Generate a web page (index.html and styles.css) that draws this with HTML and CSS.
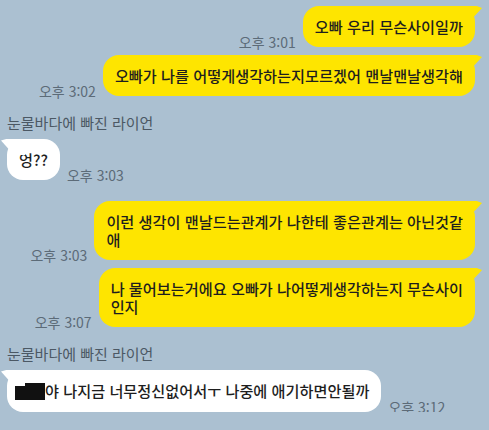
FILE: index.html
```html
<!DOCTYPE html>
<html lang="ko">
<head>
    <meta charset="UTF-8">
    <meta name="viewport" content="width=device-width, initial-scale=1.0">
    <title>채팅</title>
    <link rel="stylesheet" href="styles.css">
</head>
<body>
    <div class="chat">
        <div class="row sent">
            <span class="time">오후 3:01</span>
            <div class="bubble">오빠 우리 무슨사이일까</div>
        </div>
        <div class="row sent cont">
            <span class="time">오후 3:02</span>
            <div class="bubble">오빠가 나를 어떻게생각하는지모르겠어 맨날맨날생각해</div>
        </div>

        <div class="name">눈물바다에 빠진 라이언</div>
        <div class="row received">
            <div class="bubble">엉??</div>
            <span class="time">오후 3:03</span>
        </div>

        <div class="row sent group">
            <span class="time">오후 3:03</span>
            <div class="bubble">이런 생각이 맨날드는관계가 나한테 좋은관계는 아닌것같<br>애</div>
        </div>
        <div class="row sent cont">
            <span class="time">오후 3:07</span>
            <div class="bubble">나 물어보는거에요 오빠가 나어떻게생각하는지 무슨사이<br>인지</div>
        </div>

        <div class="name">눈물바다에 빠진 라이언</div>
        <div class="row received">
            <div class="bubble"><span class="hidden-name"></span>야 나지금 너무정신없어서ㅜ 나중에 애기하면안될까</div>
            <span class="time">오후 3:12</span>
        </div>
    </div>
</body>
</html>
```

FILE: styles.css
```css
body {
    margin: 0;
    background-color: #abc0d1;
    font-family: "Noto Sans CJK KR", "Noto Sans", sans-serif;
    color: #1e1e1e;
}
.chat {
    display: flex;
    flex-direction: column;
    padding-top: 6px;
}
.row {
    display: flex;
    align-items: flex-end;
    gap: 7px;
}
.row.cont {
    margin-top: 8px;
}
.row.group {
    margin-top: 21px;
}
.sent {
    justify-content: flex-end;
    padding-right: 14px;
}
.received {
    justify-content: flex-start;
    padding-left: 7px;
}
.bubble {
    position: relative;
    padding: 11px 12px 12px;
    font-size: 15.2px;
    font-weight: 500;
    line-height: 18px;
    border-radius: 16px;
    white-space: nowrap;
}
.sent .bubble {
    background-color: #fee500;
}
.received .bubble {
    background-color: #ffffff;
}
/* tails */
.sent .bubble::after {
    content: "";
    position: absolute;
    top: 0;
    right: -7px;
    width: 24px;
    height: 16px;
    background-color: #fee500;
    clip-path: polygon(0 0, 78% 0, 100% 12%, 46% 100%, 0 100%);
}
.received .bubble::after {
    content: "";
    position: absolute;
    top: 0;
    left: -6px;
    width: 24px;
    height: 16px;
    background-color: #ffffff;
    clip-path: polygon(22% 0, 100% 0, 100% 100%, 54% 100%, 0 10%);
}
.time {
    font-size: 14px;
    line-height: 14px;
    color: #5c6b78;
    margin-bottom: -2px;
    white-space: nowrap;
}
.name {
    margin-top: 18px;
    margin-bottom: 7px;
    padding-left: 7px;
    font-size: 15px;
    line-height: 18px;
    color: #4b5864;
}
.hidden-name {
    display: inline-block;
    width: 30px;
    height: 17px;
    margin-left: -4px;
    vertical-align: -3px;
    background-color: #111111;
}
```
